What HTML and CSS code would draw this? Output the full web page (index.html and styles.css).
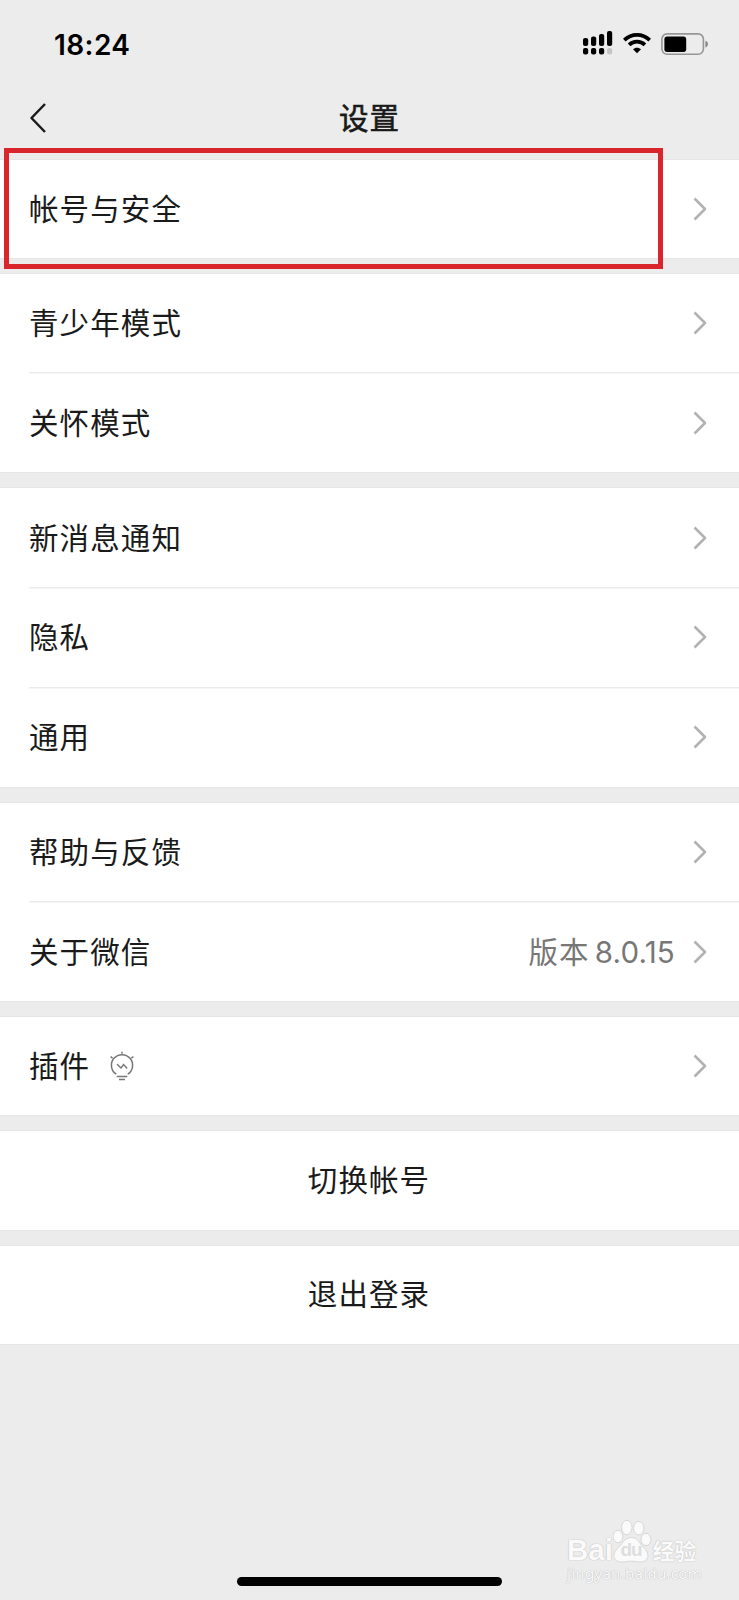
FILE: index.html
```
<!DOCTYPE html>
<html lang="zh-CN">
<head>
<meta charset="utf-8">
<title>设置</title>
<link rel="stylesheet" href="styles.css">
</head>
<body>
<svg class="defs" width="0" height="0" aria-hidden="true">
  <symbol id="chevron" viewBox="0 0 14 24"><path d="M1.5 1.5 12 12 1.5 22.5" fill="none" stroke="#b2b2b2" stroke-width="2.6" stroke-linejoin="round"/></symbol>
</svg>
<div class="screen">
  <header class="status">
    <span class="time">18:24</span>
    <div class="status-icons">
      <svg class="signal" width="32" height="26" viewBox="0 0 32 26">
        <rect x="1" y="8" width="5.2" height="8" rx="2"/><rect x="9" y="6.5" width="5.2" height="9.5" rx="2"/><rect x="17" y="4" width="5.2" height="12" rx="2"/><rect x="25" y="1" width="5.2" height="15" rx="2"/>
        <rect x="1" y="18" width="5.2" height="6.5" rx="2"/><rect x="9" y="18" width="5.2" height="6.5" rx="2"/><rect x="17" y="18" width="5.2" height="6.5" rx="2"/><rect x="25" y="18" width="5.2" height="6.5" rx="2.5" fill="#c4c4c4"/>
      </svg>
      <svg class="wifi" width="28" height="22" viewBox="0 0 28 22">
        <g fill="none" stroke="#000" stroke-width="3.7"><path d="M1.3 8.1C8.4 1 19.6 1 26.7 8.1"/><path d="M6.1 12.9c4.4-4.3 11.4-4.3 15.8 0"/></g>
        <path d="M14 21.2 10 17.2c2.2-2.1 5.8-2.1 8 0Z"/>
      </svg>
      <svg class="battery" width="48" height="23" viewBox="0 0 48 23">
        <rect x=".9" y=".9" width="41.5" height="20.4" rx="5.2" fill="none" stroke="#969696" stroke-width="1.6"/>
        <rect x="3.4" y="3.5" width="21.8" height="15.4" rx="2.7"/>
        <path d="M44.4 7.7c3.4 1.1 3.4 5.6 0 6.7Z" fill="#888"/>
      </svg>
    </div>
  </header>
  <nav class="navbar">
    <svg class="back" width="18" height="32" viewBox="0 0 18 32"><path d="M16 2 2.5 16 16 30" fill="none" stroke="#1a1a1a" stroke-width="2.5" stroke-linejoin="round"/></svg>
    <h1 class="title">设置</h1>
  </nav>
  <main class="groups">
    <section class="group">
      <div class="row"><span>帐号与安全</span><svg class="arrow"><use href="#chevron"/></svg></div>
      <div class="highlight"></div>
    </section>
    <section class="group">
      <div class="row"><span>青少年模式</span><svg class="arrow"><use href="#chevron"/></svg></div>
      <div class="row"><span>关怀模式</span><svg class="arrow"><use href="#chevron"/></svg></div>
    </section>
    <section class="group">
      <div class="row"><span>新消息通知</span><svg class="arrow"><use href="#chevron"/></svg></div>
      <div class="row"><span>隐私</span><svg class="arrow"><use href="#chevron"/></svg></div>
      <div class="row"><span>通用</span><svg class="arrow"><use href="#chevron"/></svg></div>
    </section>
    <section class="group">
      <div class="row"><span>帮助与反馈</span><svg class="arrow"><use href="#chevron"/></svg></div>
      <div class="row"><span>关于微信</span><div class="value"><span>版本</span><span class="version">8.0.15</span></div><svg class="arrow"><use href="#chevron"/></svg></div>
    </section>
    <section class="group">
      <div class="row"><span>插件</span>
        <svg class="bulb" width="26" height="30" viewBox="0 0 26 30" fill="none" stroke="#777" stroke-width="1.5">
          <path d="M7.3 23.2a10.6 10.6 0 1 1 11.4 0M13 .7v2M1.6 5.6l2 1.6M24.4 5.6l-2 1.6M7.7 25.6h10.6M10 28.4h6"/>
          <path d="m8 13.2 4 3.8 2.6-3.4 3.6 3.8"/>
        </svg>
        <svg class="arrow"><use href="#chevron"/></svg></div>
    </section>
    <section class="group"><div class="row center"><span>切换帐号</span></div></section>
    <section class="group"><div class="row center"><span>退出登录</span></div></section>
  </main>
  <div class="watermark">
    <div class="brand">
      <span class="bai">Bai</span>
      <span class="paw"><svg width="40" height="45" viewBox="0 0 40 45" fill="#fafafa" stroke="#d6d6d6" stroke-width="1"><ellipse cx="5" cy="17.5" rx="4.9" ry="6.2"/><ellipse cx="13.8" cy="8.5" rx="5.2" ry="7.3"/><ellipse cx="25.7" cy="9.2" rx="5.2" ry="6.8"/><ellipse cx="33" cy="20.5" rx="5" ry="6.2"/><path d="M18.500 18.500c-7 0-9 6-13 10-8 7-5 14.500 3 14.500 4 0 6-.8 10-.8s6 .8 9 .8c8 0 10-7.500 4-13.500C26.500 25 25.500 18.500 18.500 18.500Z"/></svg><span class="du">du</span></span>
      <span class="jing">经验</span>
    </div>
    <div class="site">jingyan.baidu.com</div>
  </div>
  <div class="home"></div>
</div>
</body>
</html>
```
FILE: styles.css
```
* { box-sizing: border-box; }
body { margin: 0; background: #ececec; }
.defs { position: absolute; }
.screen {
  position: relative;
  width: 739px;
  height: 1600px;
  overflow: hidden;
  background: #ececec;
  color: #1a1a1a;
  font-family: Inter, "Noto Sans CJK SC", sans-serif;
  font-size: 29.5px;
}
.status {
  display: flex;
  justify-content: space-between;
  height: 88px;
  padding: 0 30px 0 54px;
}
.time {
  padding-top: 28px;
  color: #000;
  font-size: 28px;
  font-weight: 600;
  line-height: 34px;
  letter-spacing: .4px;
}
.status-icons { display: flex; align-items: flex-start; }
.signal { margin-top: 30px; }
.wifi { margin: 32px 10px 0 9px; }
.battery { margin-top: 33px; }
.navbar {
  display: grid;
  grid-template-columns: 60px 1fr 60px;
  align-items: center;
  height: 71.7px;
  padding-bottom: 12px;
}
.back { margin-left: 29px; }
.title {
  margin: 0;
  font-size: 29.5px;
  font-weight: 400;
  line-height: 44px;
  letter-spacing: 1.1px;
  text-align: center;
  -webkit-text-stroke: .6px #1a1a1a;
}
.groups { display: flex; flex-direction: column; gap: 16px; }
.group {
  position: relative;
  background: #fff;
  box-shadow: 0 0 0 1px #e6e6e6;
}
.row {
  display: flex;
  align-items: center;
  height: 98.35px;
  padding: 0 32px 0 29px;
  line-height: 44px;
  letter-spacing: 1.1px;
}
.row + .row { height: 100px; background: linear-gradient(#ebebeb, #ebebeb) 29px 0 / 100% 1.5px no-repeat; padding-top: 1px; }
.arrow { width: 14px; height: 24px; margin-left: auto; }
.center { justify-content: center; padding: 0 1px 1px 0; }
.value {
  display: flex;
  gap: 5px;
  margin-left: auto;
  margin-right: 18px;
  color: #777;
}
.value + .arrow { margin-left: 0; }
.version { letter-spacing: .2px; }
.bulb { margin-left: 19px; }
.highlight {
  position: absolute;
  left: 4px;
  top: -12px;
  width: 659px;
  height: 121px;
  border: 5px solid #d9252c;
}
.home {
  position: absolute;
  left: 237px;
  bottom: 14px;
  width: 265px;
  height: 9px;
  border-radius: 5px;
  background: #000;
}
.watermark {
  position: absolute;
  left: 567px;
  top: 1519px;
  color: #fafafa;
  text-shadow: 0 0 1px #bbb, 0 0 1px #bbb;
}
.brand { display: flex; align-items: flex-end; height: 45px; }
.bai { width: 45.5px; font: 700 29.5px/29px "Liberation Sans", sans-serif; }
.paw { position: relative; width: 40px; height: 45px; }
.du { position: absolute; left: 8px; top: 20px; color: #dedede; font: 700 19px/22px "Liberation Sans", sans-serif; letter-spacing: -1px; text-shadow: none; }
.jing { font: 700 22px/29px "Noto Sans CJK SC", sans-serif; }
.site { font: 15px/18px "Noto Sans", sans-serif; letter-spacing: .3px; }
```
